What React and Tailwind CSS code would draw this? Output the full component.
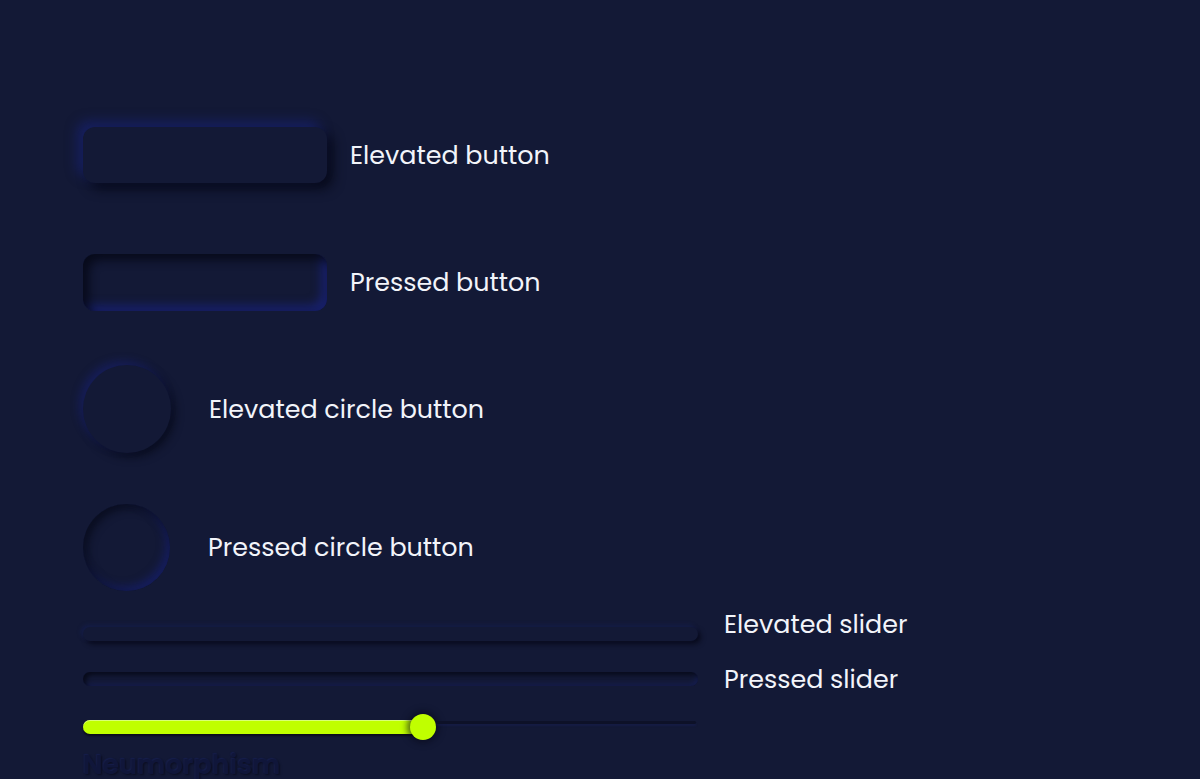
export default function App() {
  const font = { fontFamily: 'Poppins, "Inter", "Noto Sans", sans-serif' };
  return (
    <div className="min-h-[779px] w-full overflow-hidden bg-[#131936] text-[#f2f4fa]" style={font}>
      <div className="flex flex-col pl-[83px] pt-[127px]">
        {/* Elevated button */}
        <div className="flex items-center gap-[23px]">
          <button className="h-[56px] w-[244px] rounded-[12px] bg-[#131936] shadow-[-6px_-6px_12px_rgba(26,36,130,0.55),6px_6px_12px_rgba(6,8,22,0.85)]" />
          <span className="text-[25.4px] font-normal">Elevated button</span>
        </div>

        {/* Pressed button */}
        <div className="mt-[71px] flex items-center gap-[23px]">
          <button className="h-[57px] w-[244px] rounded-[12px] bg-[#131936] shadow-[inset_6px_6px_10px_rgba(6,8,22,0.85),inset_-6px_-6px_10px_rgba(26,36,140,0.6)]" />
          <span className="text-[25.4px] font-normal">Pressed button</span>
        </div>

        {/* Elevated circle */}
        <div className="mt-[54px] flex items-center gap-[38px]">
          <div className="h-[88px] w-[88px] rounded-full bg-[#131936] shadow-[-4px_-4px_8px_rgba(26,36,130,0.45),4px_4px_8px_rgba(6,8,22,0.7)]" />
          <span className="text-[25.4px] font-normal">Elevated circle button</span>
        </div>

        {/* Pressed circle */}
        <div className="mt-[51px] flex items-center gap-[38px]">
          <div className="h-[87px] w-[87px] rounded-full bg-[#131936] shadow-[inset_4px_4px_8px_rgba(6,8,22,0.7),inset_-4px_-4px_8px_rgba(26,36,140,0.5)]" />
          <span className="text-[25.4px] font-normal">Pressed circle button</span>
        </div>

        {/* Elevated slider */}
        <div className="mt-[17px] flex items-start gap-[26px]">
          <div className="mt-[19px] h-[14px] w-[615px] rounded-full bg-[#131936] shadow-[-2px_-2px_4px_rgba(26,36,110,0.35),3px_3px_5px_rgba(6,8,22,0.8)]" />
          <span className="text-[25.4px] font-normal leading-[32px]">Elevated slider</span>
        </div>

        {/* Pressed slider */}
        <div className="mt-[22px] flex items-center gap-[26px]">
          <div className="h-[14px] w-[615px] rounded-full bg-[#131936] shadow-[inset_3px_3px_4px_rgba(6,8,22,0.85),inset_-2px_-2px_4px_rgba(26,36,120,0.35)]" />
          <span className="text-[25.4px] font-normal leading-[32px]">Pressed slider</span>
        </div>

        {/* Value slider */}
        <div className="mt-[17px] flex h-[30px] w-[613px] items-center">
          <div className="h-[14px] w-[340px] rounded-l-full bg-[#c0ff00] shadow-[inset_0_1px_0_rgba(230,255,170,0.7),0_2px_2px_rgba(4,6,16,0.7)]" />
          <div className="-ml-[13px] h-[26px] w-[26px] shrink-0 rounded-full bg-[#c0ff00] shadow-[0_0_6px_3px_rgba(8,10,26,0.6)]" />
          <div className="-mt-[10px] h-[3px] flex-1 rounded-full bg-[#0d1128] shadow-[0_2px_2px_rgba(26,36,110,0.25)]" />
        </div>

        <div className="mt-[7px] text-[27px] font-semibold leading-[32px] text-[#10163a] [text-shadow:-1px_-1px_1px_rgba(30,40,120,0.35),1px_1px_2px_rgba(6,8,22,0.6)]">
          Neumorphism
        </div>
      </div>
    </div>
  );
}
